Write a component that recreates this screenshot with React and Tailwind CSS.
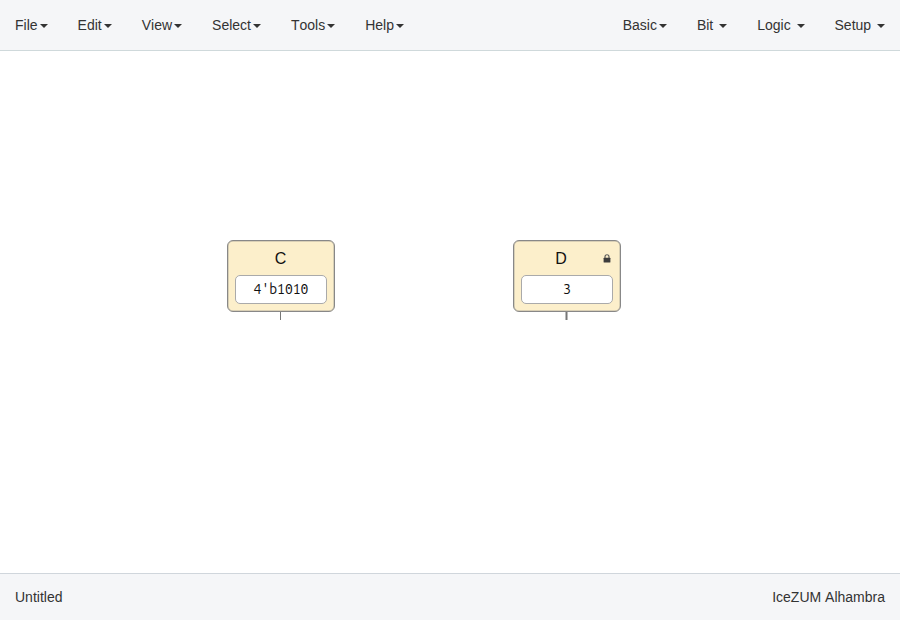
const LEFT = [
  { label: "File" },
  { label: "Edit" },
  { label: "View" },
  { label: "Select" },
  { label: "Tools" },
  { label: "Help" },
];

const RIGHT = [
  { label: "Basic" },
  { label: "Bit", spaced: true },
  { label: "Logic", spaced: true },
  { label: "Setup", spaced: true },
];

function MenuItem({ label, spaced }) {
  return (
    <li className="px-[15px] py-[15px] leading-5 whitespace-pre">
      {spaced ? label + " " : label}
      <span className="ml-[2px] inline-block h-0 w-0 border-x-4 border-t-4 border-x-transparent border-t-[#333] align-middle" />
    </li>
  );
}

function Menu({ items }) {
  return (
    <ul className="flex">
      {items.map((item) => (
        <MenuItem key={item.label} {...item} />
      ))}
    </ul>
  );
}

function Lock() {
  return (
    <svg className="absolute top-[13px] right-[9px] h-[9px] w-[8px]" viewBox="0 0 8 9">
      <path d="M2 4.3V2.7a2 2 0 0 1 4 0v1.6" fill="none" stroke="#555" strokeWidth="1.1" />
      <rect x="0.6" y="3.8" width="6.8" height="4.7" rx="0.5" fill="#3c3c3c" />
    </svg>
  );
}

function ConstantBlock({ name, value, locked, className }) {
  return (
    <div className={"absolute top-[189px] flex w-[108px] flex-col items-center " + className}>
      <div className="relative flex h-[72px] w-full flex-col items-center rounded-[6px] border border-[#888] bg-[#fcefcb] shadow-[inset_0_0_0_0.5px_#b5b0a0]">
        <span className={"mt-[7px] h-[22px] text-[16px] leading-[22px] text-[#111] " + (locked ? "-translate-x-[6px]" : "-translate-x-[0.5px]")}>{name}</span>
        {locked && <Lock />}
        <div className="mt-[5px] flex h-[29px] w-[92px] items-center justify-center rounded-[5px] border border-[#aaa] bg-white pb-[2px] font-['Ubuntu_Mono','Noto_Sans_Mono',monospace] text-[14px] text-[#111]">
          {value}
        </div>
      </div>
      <div className={"h-[8px] bg-[#777] " + (locked ? "-translate-x-[0.5px] w-[1.5px]" : "-translate-x-px w-px")} />
    </div>
  );
}

export default function App() {
  return (
    <div className="flex h-screen flex-col overflow-hidden bg-white font-['Liberation_Sans',sans-serif] text-[14px] leading-5 text-[#333] [font-kerning:none]">
      <nav className="flex h-[51px] shrink-0 justify-between border-b border-[#cfd9db] bg-[#f5f6f8]">
        <Menu items={LEFT} />
        <Menu items={RIGHT} />
      </nav>
      <main className="relative flex-1">
        <ConstantBlock name="C" value="4'b1010" className="left-[227px]" />
        <ConstantBlock name="D" value="3" locked className="left-[513px]" />
      </main>
      <footer className="flex h-[47px] shrink-0 items-center justify-between border-t border-[#d0d6dc] bg-[#f5f6f8] px-[15px]">
        <span>Untitled</span>
        <span>IceZUM Alhambra</span>
      </footer>
    </div>
  );
}
